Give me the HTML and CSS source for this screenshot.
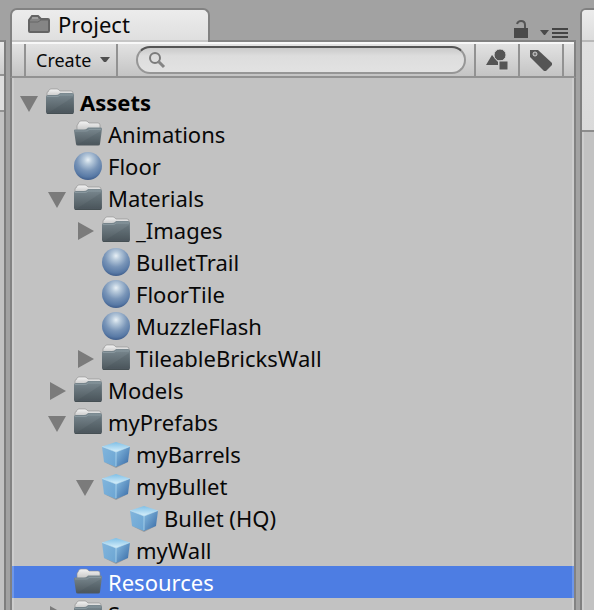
FILE: index.html
```
<!DOCTYPE html>
<html lang="en">
<head>
<meta charset="utf-8">
<title>Project</title>
<link rel="stylesheet" href="styles.css">
</head>
<body>
<svg class="defs" aria-hidden="true">
  <defs>
    <linearGradient id="paper" x1="0" y1="0" x2="0" y2="1"><stop offset="0" stop-color="#f4f4f4"/><stop offset="1" stop-color="#aaa"/></linearGradient>
    <linearGradient id="slate" x1="0" y1="0" x2="0" y2="1"><stop offset="0" stop-color="#7b8a91"/><stop offset="1" stop-color="#4d575d"/></linearGradient>
    <radialGradient id="ball" cx=".5" cy=".28" r=".72"><stop offset="0" stop-color="#e8f0f6"/><stop offset=".2" stop-color="#b9cbdc"/><stop offset=".55" stop-color="#7995b8"/><stop offset=".85" stop-color="#5879a5"/><stop offset="1" stop-color="#3e5c8a"/></radialGradient>
    <linearGradient id="cubetop" x1="0" y1="0" x2="0" y2="1"><stop offset="0" stop-color="#7fbfe6"/><stop offset="1" stop-color="#d8f0fb"/></linearGradient>
    <linearGradient id="cubeleft" x1="0" y1="0" x2="1" y2="1"><stop offset="0" stop-color="#82b5dc"/><stop offset="1" stop-color="#6ba5d3"/></linearGradient>
    <linearGradient id="cuberight" x1="0" y1="0" x2="1" y2="1"><stop offset="0" stop-color="#8abfe3"/><stop offset="1" stop-color="#3567a3"/></linearGradient>
    <symbol id="folder" viewBox="0 0 28 28">
      <path d="M1 13V5Q1 4 2 4L3 2Q4 1 5 1H11Q12 1 13 2L14 3H25Q27 3 27 5V13Z" fill="url(#paper)" stroke="#8c8c8c" stroke-width=".6"/>
      <path d="M0 9Q0 7 2 7H10Q12 7 13 6L14 5H26Q28 5 28 7V24Q28 26 26 26H2Q0 26 0 24Z" fill="url(#slate)"/>
      <path d="M1 8.500H11Q13 8.500 14 7H27" fill="none" stroke="#93a2a9" stroke-width=".7"/>
      <path d="M27 9Q18 15 3 24.500H27Z" fill="#34424a" opacity=".14"/>
      <path d="M1 25.500H27" stroke="#434c51" stroke-width=".8"/>
    </symbol>
    <symbol id="folder-open" viewBox="0 0 28 28">
      <path d="M3 16V6Q3 5 4 4L5 2Q6 1 7 1H12Q13 1 14 2L15 3H24Q26 3 26 5V16Z" fill="url(#paper)" stroke="#8c8c8c" stroke-width=".6"/>
      <path d="M0 10.500Q0 9.500 1 9.500H10Q12 9.500 13 8.500L14 7.500H27Q28 7.500 28 9L26 24Q26 25.500 24 25.500H4Q2 25.500 2 24Z" fill="url(#slate)"/>
      <path d="M1 11H12Q14 11 15 9.500H27" fill="none" stroke="#93a2a9" stroke-width=".6"/>
      <path d="M27 11Q18 16 4 24.500H25Z" fill="#34424a" opacity=".12"/>
    </symbol>
    <symbol id="sphere" viewBox="0 0 28 28">
      <circle cx="14" cy="14" r="14" fill="url(#ball)"/>
    </symbol>
    <symbol id="cube" viewBox="0 0 28 28">
      <path d="M2 22 14 28 26 22 14 25Z" fill="#555" opacity=".35"/>
      <path d="M14 2 28 6.500 14 12 0 6.500Z" fill="url(#cubetop)"/>
      <path d="M0 6.500 14 12V27L2 22Z" fill="url(#cubeleft)"/>
      <path d="M28 6.500 14 12V27L26 22Z" fill="url(#cuberight)"/>
      <path d="M0 6.500 14 12 28 6.500M14 12V26" fill="none" stroke="#c5e7f8" stroke-width=".6"/>
    </symbol>
    <symbol id="down" viewBox="0 0 18 20"><path d="M0 4H18L9 20Z"/></symbol>
    <symbol id="right" viewBox="0 0 18 20"><path d="M2 2 18 11 2 20Z"/></symbol>
  </defs>
</svg>
<div class="workspace">
  <aside class="left-pane"><div class="left-bar"></div><div class="left-field"></div></aside>
  <main class="panel">
    <header class="tabs">
      <h1 class="tab">
        <svg class="tab-icon" viewBox="0 0 22 18" aria-hidden="true"><path d="M1 16V5L4 1H10L13 4H20Q21 4 21 5V16Q21 17 20 17H2Q1 17 1 16Z" fill="#858585" stroke="#646464" stroke-width="2"/><path d="M2 7H10L13 5H20" fill="none" stroke="#666"/><path d="M4 3H10" stroke="#bbb"/></svg>
        <span>Project</span>
      </h1>
      <div class="tab-tools">
        <button class="plain" aria-label="Lock"><svg width="14" height="18" viewBox="0 0 14 18"><path d="M0 8H14V18H0Z" fill="#4a4a4a"/><path d="M3 4Q4 1 7 1Q11 1 11 5V8" fill="none" stroke="#555" stroke-width="2"/></svg></button>
        <button class="plain" aria-label="Panel menu"><svg width="28" height="10" viewBox="0 0 28 10"><path d="M0 2H9L5 7H4Z" fill="#4a4a4a"/><path d="M12 1H28M12 5H28M12 9H28" stroke="#444" stroke-width="2"/></svg></button>
      </div>
    </header>
    <div class="toolbar">
      <button class="create">Create<svg width="10" height="6" viewBox="0 0 10 6"><path d="M0 0H10L6 5H4Z" fill="#505050"/></svg></button>
      <label class="search">
        <svg width="18" height="18" viewBox="0 0 18 18"><circle cx="7" cy="7" r="5" fill="none" stroke="#7b7b7b" stroke-width="2"/><path d="M10 10 16 16" stroke="#858585" stroke-width="3"/></svg>
        <input type="text" aria-label="Search">
      </label>
      <button class="tool" aria-label="Search by type"><svg width="24" height="22" viewBox="0 0 24 22"><path d="M1 16 7 6 13 13V16Z" fill="#555"/><circle cx="15" cy="6" r="6" fill="#555" stroke="#d2d2d2"/><path d="M14 12H23V21H14Z" fill="#555" stroke="#d0d0d0"/></svg></button>
      <button class="tool" aria-label="Search by label"><svg width="22" height="22" viewBox="0 0 22 22"><path d="M0 1H8L22 14V16L16 22H14L0 8Z" fill="#555"/><circle cx="5" cy="5" r="2" fill="#777" stroke="#d0d0d0"/></svg></button>
    </div>
    <ul class="tree" role="tree" aria-label="Assets">
      <li class="row level-1 root" role="treeitem"><button class="arrow" aria-label="Collapse"><svg><use href="#down"/></svg></button><svg class="icon"><use href="#folder"/></svg><span>Assets</span></li>
      <li class="row level-2 leaf" role="treeitem"><svg class="icon"><use href="#folder-open"/></svg><span>Animations</span></li>
      <li class="row level-2 leaf" role="treeitem"><svg class="icon"><use href="#sphere"/></svg><span>Floor</span></li>
      <li class="row level-2" role="treeitem"><button class="arrow" aria-label="Collapse"><svg><use href="#down"/></svg></button><svg class="icon"><use href="#folder"/></svg><span>Materials</span></li>
      <li class="row level-3" role="treeitem"><button class="arrow" aria-label="Expand"><svg><use href="#right"/></svg></button><svg class="icon"><use href="#folder"/></svg><span>_Images</span></li>
      <li class="row level-3 leaf" role="treeitem"><svg class="icon"><use href="#sphere"/></svg><span>BulletTrail</span></li>
      <li class="row level-3 leaf" role="treeitem"><svg class="icon"><use href="#sphere"/></svg><span>FloorTile</span></li>
      <li class="row level-3 leaf" role="treeitem"><svg class="icon"><use href="#sphere"/></svg><span>MuzzleFlash</span></li>
      <li class="row level-3" role="treeitem"><button class="arrow" aria-label="Expand"><svg><use href="#right"/></svg></button><svg class="icon"><use href="#folder"/></svg><span>TileableBricksWall</span></li>
      <li class="row level-2" role="treeitem"><button class="arrow" aria-label="Expand"><svg><use href="#right"/></svg></button><svg class="icon"><use href="#folder"/></svg><span>Models</span></li>
      <li class="row level-2" role="treeitem"><button class="arrow" aria-label="Collapse"><svg><use href="#down"/></svg></button><svg class="icon"><use href="#folder"/></svg><span>myPrefabs</span></li>
      <li class="row level-3 leaf" role="treeitem"><svg class="icon"><use href="#cube"/></svg><span>myBarrels</span></li>
      <li class="row level-3" role="treeitem"><button class="arrow" aria-label="Collapse"><svg><use href="#down"/></svg></button><svg class="icon"><use href="#cube"/></svg><span>myBullet</span></li>
      <li class="row level-4 leaf" role="treeitem"><svg class="icon"><use href="#cube"/></svg><span>Bullet (HQ)</span></li>
      <li class="row level-3 leaf" role="treeitem"><svg class="icon"><use href="#cube"/></svg><span>myWall</span></li>
      <li class="row level-2 leaf selected" role="treeitem" aria-selected="true"><svg class="icon"><use href="#folder-open"/></svg><span>Resources</span></li>
      <li class="row level-2" role="treeitem"><button class="arrow" aria-label="Expand"><svg><use href="#right"/></svg></button><svg class="icon"><use href="#folder"/></svg><span>Scenes</span></li>
    </ul>
  </main>
  <aside class="right-pane"><div class="right-head"></div></aside>
</div>
</body>
</html>
```
FILE: styles.css
```
* { box-sizing: border-box; }

body {
  margin: 0;
  background: #a2a2a2;
  color: #080808;
  font-family: "Lucida Grande", "Noto Sans", "Open Sans", sans-serif;
}

button {
  border: 0;
  padding: 0;
  background: none;
  color: inherit;
  font: inherit;
}

.defs {
  position: absolute;
  width: 0;
  height: 0;
}

.workspace {
  display: grid;
  grid-template-columns: 6px minmax(0, 1fr) 14px;
  gap: 4px;
  height: 100vh;
  overflow: hidden;
}

.left-pane {
  margin-top: 40px;
  border-top: 2px solid #858585;
  border-right: 2px solid #7e7e7e;
  background: #c2c2c2;
}

.left-bar {
  height: 34px;
  border-bottom: 2px solid #929292;
  background: linear-gradient(#e8e8e8, #cccccc);
}

.left-field {
  height: 36px;
  border-bottom: 2px solid #929292;
  background: #dedede;
}

.right-pane {
  margin-top: 8px;
  border: solid #808080;
  border-width: 2px 0 0 2px;
  border-top-left-radius: 6px;
  background: #c2c2c2;
  box-shadow: inset 2px 0 #cdcdcd;
}

.right-head {
  height: 122px;
  border-bottom: 2px solid #8c8c8c;
  border-top-left-radius: 4px;
  background: linear-gradient(#ececec, #dcdcdc 30px, #b8b8b8 30px, #b8b8b8 32px, #e0e0e0 32px, #dadada);
}

.panel {
  display: flex;
  flex-direction: column;
  min-width: 0;
}

.tabs {
  display: flex;
  justify-content: space-between;
  flex: none;
  height: 40px;
  padding-top: 8px;
}

.tab {
  position: relative;
  display: flex;
  gap: 8px;
  width: 200px;
  margin: 0 0 -2px;
  padding: 2px 16px 0;
  border: 2px solid #828282;
  border-bottom: 0;
  border-radius: 7px 7px 0 0;
  background: linear-gradient(#ececec, #dfdfdf 30px, #c6c6c6 30px);
  font-size: 22px;
  font-weight: 400;
  line-height: 24px;
}

.tab-icon {
  width: 22px;
  height: 18px;
  margin-top: 3px;
}

.tab-tools {
  display: flex;
  align-items: flex-end;
  gap: 12px;
  padding: 0 8px 2px 0;
}

.plain svg { display: block; }

.toolbar {
  display: flex;
  flex: none;
  height: 38px;
  padding: 0 10px 0 12px;
  border: 2px solid #828282;
  border-bottom-color: #929292;
  background: linear-gradient(#f8f8f8 2px, #e2e2e2 2px, #c4c4c4);
}

.create {
  display: flex;
  align-items: center;
  gap: 9px;
  margin-top: 2px;
  padding: 0 6px 0 10px;
  border: solid #929292;
  border-width: 0 2px;
  font-size: 18px;
  line-height: 24px;
}

.search {
  display: flex;
  align-items: center;
  flex: 1;
  min-width: 0;
  gap: 6px;
  height: 28px;
  margin: 4px 8px 4px 18px;
  padding: 0 10px;
  border: 2px solid #969696;
  border-top-color: #555555;
  border-radius: 14px;
  background: linear-gradient(#cacaca, #dddddd 8px, #e2e2e2);
}

.search input {
  flex: 1;
  min-width: 0;
  border: 0;
  outline: 0;
  background: none;
  font: inherit;
}

.tool {
  width: 44px;
  margin-top: 2px;
  border-left: 2px solid #929292;
}

.tool:last-child {
  width: 46px;
  border-right: 2px solid #929292;
}

.tool svg {
  display: block;
  margin: 0 auto;
}

.tree {
  flex: 1;
  min-height: 0;
  margin: 0;
  padding: 8px 0 0;
  overflow: hidden;
  border: solid #828282;
  border-width: 0 2px;
  background: #c2c2c2;
  box-shadow: inset 2px 0 #cdcdcd, inset -2px 0 #cdcdcd;
  list-style: none;
}

.row {
  display: flex;
  align-items: center;
  height: 32px;
  font-size: 22px;
  line-height: 32px;
  white-space: nowrap;
}

.level-1 { padding-left: 8px; }
.level-2 { padding-left: 36px; }
.level-3 { padding-left: 64px; }
.level-4 { padding-left: 92px; }

.root {
  color: #000000;
  font-weight: 700;
}

.selected {
  background: #4d7de3;
  box-shadow: inset 2px 0 #6f97e9, inset -2px 0 #6f97e9;
  color: #ffffff;
}

.arrow {
  width: 18px;
  height: 20px;
  margin-right: 8px;
}

.arrow svg {
  display: block;
  width: 18px;
  height: 20px;
  fill: #7b7b7b;
}

.icon {
  flex: none;
  width: 28px;
  height: 28px;
  margin-right: 6px;
}

.leaf .icon { margin-left: 26px; }
```
